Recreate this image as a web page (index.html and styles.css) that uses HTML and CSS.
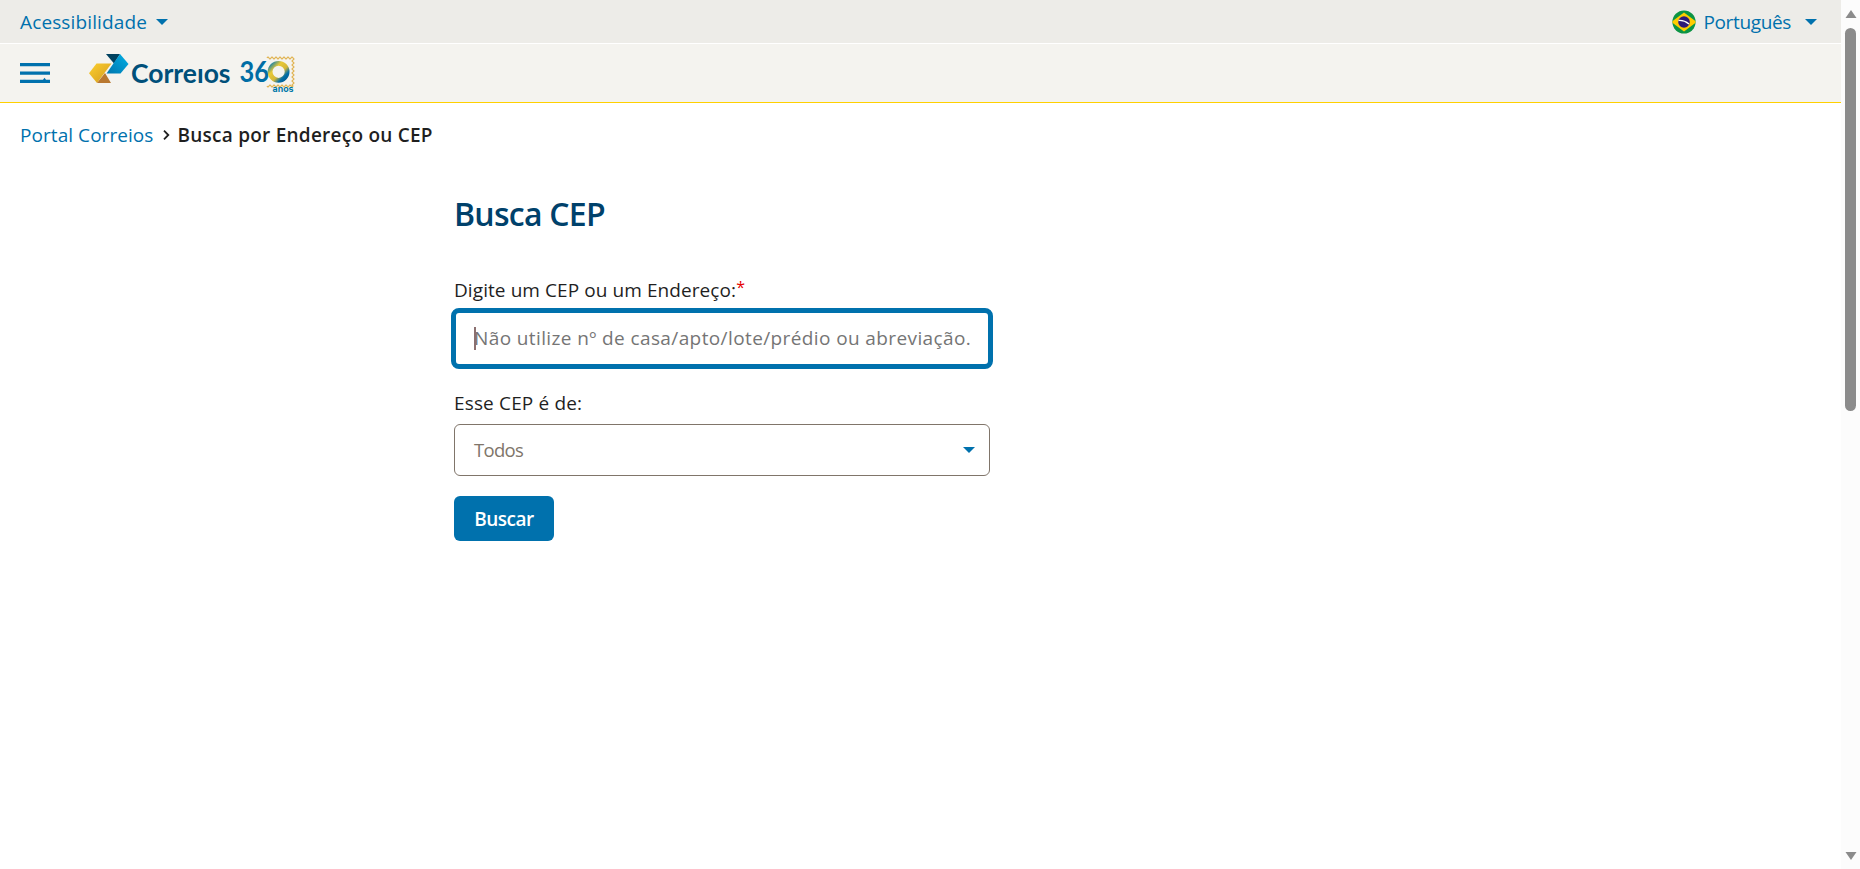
FILE: index.html
```html
<!DOCTYPE html>
<html lang="pt-BR">
<head>
<meta charset="utf-8">
<title>Busca CEP</title>
<link rel="stylesheet" href="styles.css">
</head>
<body>
<div class="page">
  <div class="topbar">
    <a class="menu-link"><span class="t-acess">Acessibilidade</span><svg class="caret" width="12" height="6" viewBox="0 0 12 6"><path d="M0 0h12L6 6z"/></svg></a>
    <a class="menu-link lang">
      <svg class="flag" width="24" height="24" viewBox="0 0 24 24"><defs><clipPath id="disc"><circle cx="12" cy="12" r="11.6"/></clipPath></defs><g clip-path="url(#disc)"><path fill="#0b9444" d="M0 0h24v24H0z"/><path fill="#fc0" d="M12 2.5 24.5 12 12 21.500-.5 12z"/><circle cx="12" cy="12" r="5.800" fill="#2e1a78"/><path d="M6.500 10.500q5.500-.5 10.500 3.500" fill="none" stroke="#fff" stroke-width="1.300"/></g></svg>
      <span class="t-port">Português</span><svg class="caret" width="12" height="6" viewBox="0 0 12 6"><path d="M0 0h12L6 6z"/></svg>
    </a>
  </div>
  <header class="header">
    <svg class="burger" width="30" height="20" viewBox="0 0 30 20"><path d="M0 0h30v3.300H0zM0 8.500h30v3.300H0zM0 16.800h23l1.500-2 1.500 2H30V20H0z"/></svg>
    <svg class="logo" width="206" height="42" viewBox="0 0 206 42">
      <defs>
        <linearGradient id="gold" x1="0" y1="0" x2="1" y2="1"><stop offset="0" stop-color="#fccf2f"/><stop offset="1" stop-color="#d39a1c"/></linearGradient>
        <linearGradient id="blue" x1="1" y1="0" x2="0" y2="1"><stop offset="0" stop-color="#02b0e6"/><stop offset="1" stop-color="#0075ad"/></linearGradient>
        <linearGradient id="ring" x1="0" y1="0" x2="1" y2="1"><stop offset="0" stop-color="#0079b3"/><stop offset=".3" stop-color="#e8c936"/><stop offset=".6" stop-color="#d4b738"/><stop offset=".8" stop-color="#006ea8"/><stop offset="1" stop-color="#005b91"/></linearGradient>
      </defs>
      <path fill="#00415f" d="M17 2h14l-6 9.500z"/>
      <path fill="url(#blue)" d="M31 2 39.500 12 31.500 21.500H17.500z"/>
      <path fill="url(#gold)" d="M7.500 11.500H22.500L8 31 0 21.200z"/>
      <path fill="#b97830" d="M8 31h14l-6-10z"/>
      <text class="wordmark" x="42" y="30.500" textLength="99.500" lengthAdjust="spacingAndGlyphs">Correıos</text>
      <text class="years" x="150.500" y="30" textLength="29.500" lengthAdjust="spacingAndGlyphs">36</text>
      <path class="stamp" d="M178 6q1-2 2 0t2 0 2 0 2 0 2 0 2 0 2 0 2 0 2 0 2 0 2 0 2 0 2 0q2 1 0 2t0 2 0 2 0 2 0 2 0 2 0 2 0 2 0 2 0 2 0 2 0 2 0 2 0 2q-1 2-2 0t-2 0-2 0-2 0-2 0-2 0-2 0-2 0-2 0-2 0-2 0-2 0-2 0"/>
      <circle cx="189.600" cy="19.800" r="8.500" fill="#f4f3ef" stroke="url(#ring)" stroke-width="4.800"/>
      <text class="anos" x="183.500" y="40" textLength="21" lengthAdjust="spacingAndGlyphs">anos</text>
    </svg>
  </header>
  <nav class="crumbs"><a class="t-portal">Portal Correios</a><svg class="chev" width="7" height="10" viewBox="0 0 7 10"><path d="M1 .7 5.300 5 1 9.300"/></svg><strong class="t-here">Busca por Endereço ou CEP</strong></nav>
  <main class="form">
    <h1><span class="t-title">Busca CEP</span></h1>
    <label class="label-main"><span class="t-label">Digite um CEP ou um Endereço:</span><span class="req">*</span></label>
    <div class="input"><i class="cursor"></i><span class="t-ph">Não utilize nº de casa/apto/lote/prédio ou abreviação.</span></div>
    <label class="label-type"><span class="t-type">Esse CEP é de:</span></label>
    <div class="select"><span class="t-todos">Todos</span><svg class="caret" width="12" height="6" viewBox="0 0 12 6"><path d="M0 0h12L6 6z"/></svg></div>
    <button class="btn"><span class="t-btn">Buscar</span></button>
  </main>
</div>
<div class="scroll">
  <svg width="12" height="8" viewBox="0 0 12 8"><path d="M6 0 11.500 8H.5z"/></svg>
  <div class="thumb"></div>
  <svg class="down" width="12" height="8" viewBox="0 0 12 8"><path d="M6 8 11.500 0H.5z"/></svg>
</div>
</body>
</html>
```
FILE: styles.css
```css
* { box-sizing: border-box; }
body { margin: 0; height: 869px; overflow: hidden; display: flex; background: #fff; color: #1f1f1f; font: 19px/24px "Open Sans", "Noto Sans", sans-serif; white-space: nowrap; }
.page { width: 1841px; }
.topbar { height: 44px; display: flex; justify-content: space-between; background: #edece8; border-bottom: 1px solid #fff; padding: 0 24px 0 20px; }
.menu-link { display: flex; align-items: center; color: #0071ad; }
.t-acess { letter-spacing: .13px; }
.t-port { letter-spacing: -.35px; }
.caret { fill: #0071ad; margin-left: 9px; }
.lang .caret { margin-left: 14px; }
.flag { margin-right: 7px; }
.header { height: 59px; display: flex; background: #f4f3ef; border-bottom: 1px solid #ffd000; padding: 8px 20px; }
.burger { fill: #0071ad; margin-top: 11px; }
.logo { margin-left: 39px; }
.wordmark { font: 700 27px Lato, sans-serif; fill: #00507a; }
.years { font: 700 28px Lato, sans-serif; fill: #006da5; }
.anos { font: bold 9px Inter, sans-serif; fill: #0078a8; }
.stamp { fill: none; stroke: #dfae45; stroke-width: 1.100; }
.crumbs { display: flex; align-items: center; height: 65px; padding: 0 0 2px 20px; }
.crumbs a { color: #0071ad; letter-spacing: .06px; }
.crumbs strong { font-weight: 600; letter-spacing: .24px; }
.chev { margin: 0 7px 0 10px; fill: none; stroke: #1f1f1f; stroke-width: 1.800; }
.form { width: 536px; margin-left: 454px; display: flex; flex-direction: column; align-items: flex-start; }
h1 { margin: 26px 0 0; font-size: 32px; line-height: 40px; font-weight: 600; letter-spacing: -.75px; color: #00416b; }
.label-main { height: 24px; margin-top: 44px; }
.t-label { letter-spacing: .08px; }
.req { color: #e60000; font-size: 16px; line-height: 1; vertical-align: 4px; }
.input { position: relative; width: 542px; height: 61px; margin: 6px -3px 0; border: 5px solid #0071ad; border-radius: 8px; padding: 0 0 2px 18px; display: flex; align-items: center; color: #757575; }
.t-ph { letter-spacing: .39px; }
.cursor { position: absolute; left: 18px; top: 14px; width: 2px; height: 23px; background: #8b7070; }
.label-type { height: 24px; margin-top: 22px; letter-spacing: .15px; }
.select { width: 536px; height: 52px; margin-top: 9px; border: 1px solid #80756a; border-radius: 6px; padding: 0 14px 0 19px; display: flex; align-items: center; justify-content: space-between; color: #80756a; }
.t-todos { font-size: 18.5px; letter-spacing: -.7px; }
.btn { width: 100px; height: 45px; margin-top: 20px; border: 0; border-radius: 6px; background: #0071ad; color: #fff; font: 600 19px/24px "Open Sans", sans-serif; letter-spacing: -.5px; padding: 0; }
.scroll { width: 19px; background: #fcfcfc; display: flex; flex-direction: column; align-items: center; padding: 10px 0; fill: #8b8b8b; }
.thumb { width: 11px; height: 383px; margin-top: 10px; border-radius: 6px; background: #8b8b8b; }
.down { margin-top: auto; margin-bottom: -1px; }
```
